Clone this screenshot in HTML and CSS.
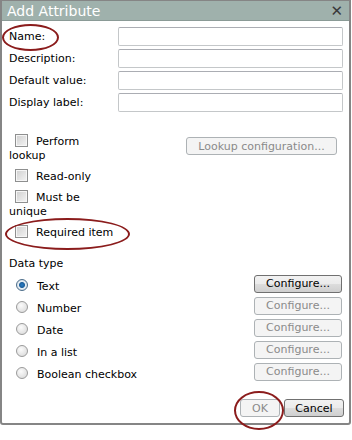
FILE: index.html
```html
<!DOCTYPE html>
<html lang="en">
<head>
    <meta charset="UTF-8">
    <title>Add Attribute</title>
    <link rel="stylesheet" href="styles.css">
</head>
<body>
    <div class="dialog">
        <div class="titulo">
            <span>Add Attribute</span>
            <span class="fechar">&#x2715;</span>
        </div>
        <div class="corpo">
            <div class="campos">
                <label class="nome">Name:</label><input type="text" class="texto">
                <label>Description:</label><input type="text" class="texto">
                <label>Default value:</label><input type="text" class="texto">
                <label>Display label:</label><input type="text" class="texto">
            </div>

            <div class="opcoes">
                <div class="linha">
                    <div class="check"><span class="caixa"></span>Perform lookup</div>
                    <button class="botao desativado lookup">Lookup configuration...</button>
                </div>
                <div class="check"><span class="caixa"></span>Read-only</div>
                <div class="check"><span class="caixa"></span>Must be unique</div>
                <div class="check requerido"><span class="caixa"></span>Required item</div>
            </div>

            <div class="tipos">
                <div class="tipo-titulo">Data type</div>
                <div class="tipo"><span class="radio marcado"></span><span class="nome-tipo">Text</span><button class="botao">Configure...</button></div>
                <div class="tipo"><span class="radio"></span><span class="nome-tipo">Number</span><button class="botao desativado">Configure...</button></div>
                <div class="tipo"><span class="radio"></span><span class="nome-tipo">Date</span><button class="botao desativado">Configure...</button></div>
                <div class="tipo"><span class="radio"></span><span class="nome-tipo">In a list</span><button class="botao desativado">Configure...</button></div>
                <div class="tipo"><span class="radio"></span><span class="nome-tipo">Boolean checkbox</span><button class="botao desativado">Configure...</button></div>
            </div>

            <div class="rodape">
                <button class="botao desativado ok">OK</button>
                <button class="botao cancelar">Cancel</button>
            </div>
        </div>
    </div>
</body>
</html>
```

FILE: styles.css
```css
* {
    padding: 0;
    margin: 0;
    box-sizing: border-box;
    font-family: 'DejaVu Sans', Verdana, sans-serif;
}

body {
    background: #fff;
    width: 352px;
    height: 440px;
}

/* Janela */
.dialog {
    width: 351px;
    height: 425px;
    border: 2px solid #858585;
    border-top-width: 1px;
    border-radius: 0 0 3px 3px;
    background: #fff;
}

.titulo {
    height: 20px;
    background: #9fb1ac;
    color: #fff;
    display: flex;
    align-items: center;
    justify-content: space-between;
    padding: 0 6px 0 5px;
    font-size: 14px;
    border-bottom: 1px solid #8a9a96;
}

.fechar {
    color: #3a3a3a;
    font-size: 15px;
    font-weight: bold;
}

.corpo {
    position: relative;
    padding: 6px 5px 0 7px;
    font-size: 11px;
    color: #000;
}

/* Campos de texto */
.campos {
    display: grid;
    grid-template-columns: 109px 1fr;
    row-gap: 3px;
    align-items: center;
}

.campos label {
    line-height: 19px;
}

.texto {
    height: 19px;
    width: 225px;
    border: 1px solid #c4c7c9;
    border-top-color: #abadb3;
    border-radius: 2px;
    background: #fff;
}

.nome {
    position: relative;
}

.nome::after {
    content: '';
    position: absolute;
    left: -7px;
    top: -3px;
    width: 53px;
    height: 23px;
    border: 2px solid #8b1c1c;
    border-radius: 50%;
}

/* Opcoes */
.opcoes {
    margin-top: 22px;
    display: flex;
    flex-direction: column;
    gap: 6px;
}

.linha {
    display: flex;
    align-items: flex-start;
}

.check {
    width: 106px;
    line-height: 14px;
    position: relative;
}

.caixa {
    display: inline-block;
    vertical-align: -2px;
    width: 13px;
    height: 13px;
    margin: 0 8px 0 6px;
    border: 1px solid #8e8f8f;
    background: linear-gradient(135deg, #cfcfcf, #f4f4f4);
    box-shadow: inset 0 0 0 1px #f6f6f6;
}

.requerido::after {
    content: '';
    position: absolute;
    left: -4px;
    top: -7px;
    width: 121px;
    height: 28px;
    border: 2px solid #8b1c1c;
    border-radius: 50%;
}

/* Botoes */
.botao {
    height: 18px;
    font-size: 11px;
    padding: 0 5px;
    color: #000;
    border: 1px solid #707070;
    border-radius: 3px;
    background: linear-gradient(#f2f2f2, #ebebeb 50%, #dddddd 50%, #cfcfcf);
}

.botao.desativado {
    color: #8a8a8a;
    border-color: #adb2b5;
    background: #f4f4f4;
}

.lookup {
    margin: 3px 0 0 71px;
    width: 151px;
}

/* Tipo de dados */
.tipos {
    margin-top: 17px;
}

.tipo-titulo {
    line-height: 14px;
    margin-bottom: 3px;
}

.tipo {
    display: flex;
    align-items: center;
    height: 22px;
}

.radio {
    width: 12px;
    height: 12px;
    border-radius: 50%;
    margin: 0 9px 0 7px;
    border: 1px solid #9a9a9a;
    background: radial-gradient(circle at 40% 35%, #fbfbfb, #d6d6d6);
}

.radio.marcado {
    border-color: #4c6d8a;
    background: radial-gradient(circle, #2a7fc7 0, #1d5f9c 2.5px, #e6eef4 3.5px, #cfd9e2 6px);
}

.nome-tipo {
    flex: 1;
    padding-top: 3px;
}

.tipo .botao {
    width: 88px;
    margin-right: 2px;
    margin-top: -3px;
}

/* Rodape */
.rodape {
    display: flex;
    justify-content: flex-end;
    gap: 4px;
    margin-top: 15px;
    padding-right: 0;
    position: relative;
}

.ok {
    width: 40px;
    position: relative;
}

.ok::after {
    content: '';
    position: absolute;
    left: -7px;
    top: -9px;
    width: 46px;
    height: 35px;
    border: 2px solid #8b1c1c;
    border-radius: 50%;
}

.cancelar {
    width: 60px;
}
```
